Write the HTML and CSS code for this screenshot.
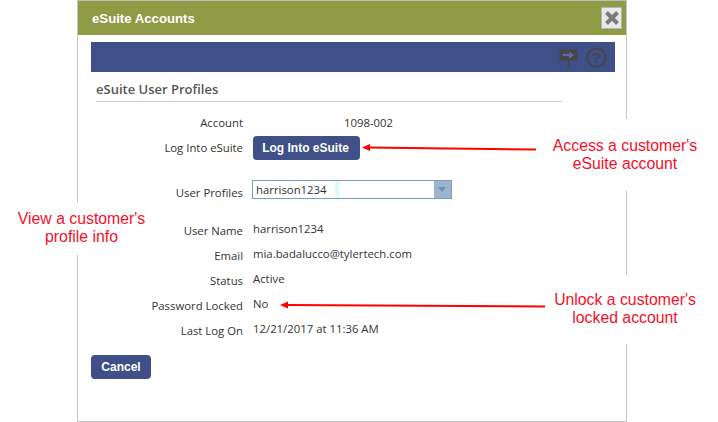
FILE: index.html
```html
<!DOCTYPE html>
<html lang="en">
<head>
<meta charset="utf-8">
<title>eSuite Accounts</title>
<link rel="stylesheet" href="styles.css">
</head>
<body>
<div class="page">
  <section class="dialog">
    <header class="titlebar">
      <h1 class="title">eSuite Accounts</h1>
      <button class="close" type="button" aria-label="Close">
        <svg width="16" height="16" viewBox="0 0 16 16"><path class="close-x" d="M2.5 2.5l11 11M13.5 2.5l-11 11"/></svg>
      </button>
    </header>
    <div class="toolbar">
      <svg class="tool-sign" width="19" height="19" viewBox="0 0 19 19"><path class="sign" d="M0.5 0.5h18v11h-8v7h-2v-7h-8z"/><path class="sign-arrow" d="M4 5h6V2.5l5 3.5-5 3.5V7H4z"/></svg>
      <svg class="tool-help" width="21" height="21" viewBox="0 0 21 21"><circle class="help-ring" cx="10.5" cy="10.5" r="9.2"/><text class="help-q" x="10.5" y="15.5" text-anchor="middle">?</text></svg>
    </div>
    <h2 class="section">eSuite User Profiles</h2>
    <div class="form form-top">
      <div class="label">Account</div><div class="value value-account">1098-002</div>
      <div class="label label-login">Log Into eSuite</div><div class="value"><button class="btn btn-login" type="button">Log Into eSuite</button></div>
    </div>
    <div class="form form-select">
      <div class="label label-select">User Profiles</div>
      <div class="select"><span class="select-text">harrison1234</span><span class="select-fade"></span><span class="select-arrow"></span></div>
    </div>
    <div class="form form-info">
      <div class="label">User Name</div><div class="value">harrison1234</div>
      <div class="label">Email</div><div class="value">mia.badalucco@tylertech.com</div>
      <div class="label">Status</div><div class="value">Active</div>
      <div class="label">Password Locked</div><div class="value">No</div>
      <div class="label">Last Log On</div><div class="value">12/21/2017 at 11:36 AM</div>
    </div>
    <button class="btn btn-cancel" type="button">Cancel</button>
  </section>

  <div class="note note-access">Access a customer's<br>eSuite account</div>
  <div class="note note-unlock">Unlock a customer's<br>locked account</div>
  <div class="note note-view">View a customer's<br>profile info</div>

  <svg class="arrows" width="718" height="422" viewBox="0 0 718 422">
    <path class="arrow-line" d="M536 149.5L368 147.5"/>
    <path class="arrow-head" d="M362 147.5l8-3.5v7z"/>
    <path class="arrow-line" d="M545 306.5L286 305"/>
    <path class="arrow-head" d="M280 305l8-3.5v7z"/>
  </svg>
</div>
</body>
</html>
```
FILE: styles.css
```css
* { box-sizing: border-box; }
html, body { margin: 0; padding: 0; background: #fff; }
.page { position: relative; width: 718px; height: 422px; overflow: hidden; font-family: "Open Sans", "Noto Sans", sans-serif; color: #333; }

.dialog { width: 550px; height: 422px; margin-left: 77px; border: 1px solid #c6c6c6; border-top-color: #bdbdbd; }
.titlebar { height: 34px; background: #8f9a45; display: flex; align-items: center; justify-content: space-between; padding: 0 4px 0 14px; }
.title { margin: 0; font: bold 13.2px "Liberation Sans", Arial, sans-serif; color: #fff; }
.close { width: 21px; height: 22px; padding: 0; background: #e9e9e9; border: 1px solid #b4b4b4; display: flex; align-items: center; justify-content: center; }
.close-x { fill: none; stroke: #7b7b7b; stroke-width: 4; }

.toolbar { height: 30px; margin: 7px 11px 0 13px; background: #3f4f88; display: flex; align-items: center; justify-content: flex-end; gap: 8px; padding-right: 8px; }
.tool-sign { margin-top: 2px; }
.sign { fill: #464649; }
.sign-arrow { fill: #5a6ba8; }
.help-ring { fill: none; stroke: #45454d; stroke-width: 2.2; }
.help-q { font: bold 15px "Liberation Sans", Arial, sans-serif; fill: #45454d; }

.section { margin: 9px 64px 0 18px; height: 21px; padding: 0; border-bottom: 1px solid #c9c9c9; font: 600 13px/16px "Open Sans", sans-serif; color: #555; }

.form { display: grid; grid-template-columns: 165px 1fr; column-gap: 10px; font-size: 11.35px; line-height: 16px; }
.label { text-align: right; padding-top: 2px; color: #333; }
.value { color: #333; }
.form-top { margin-top: 11px; grid-template-rows: 23px 24px; }
.value-account { padding: 2px 0 0 91px; }
.label-login { padding-top: 4px; }
.form-select { margin-top: 17px; align-items: center; }
.label-select { padding-top: 8px; }
.form-info { margin-top: 20px; grid-auto-rows: 25px; }

.btn { border: 0; border-radius: 4px; background: #3f4f88; color: #fff; font: bold 12px "Liberation Sans", Arial, sans-serif; padding: 0; }
.btn-login { width: 107px; height: 24px; padding-right: 2px; }
.btn-cancel { display: block; width: 60px; height: 24px; margin: 9px 0 0 13px; }

.select { position: relative; width: 200px; height: 19px; margin-left: -1px; border: 1px solid #7c9dbd; display: flex; align-items: center; padding: 1px 0 0 3px; background: #fff; }
.select-text { font-size: 11.35px; }
.select-fade { position: absolute; left: 80px; top: 0; bottom: 0; width: 6px; background: linear-gradient(90deg, #fff, #d4f2fa); }
.select-arrow { position: absolute; right: 0; top: 0; bottom: 0; width: 17px; background: #9ab6cf; }
.select-arrow::after { content: ""; position: absolute; left: 4px; top: 6px; border: 4px solid transparent; border-top: 5px solid #6f8fae; border-bottom: 0; }

.note { position: absolute; background: #fff; color: #f50f28; font: 15.8px/18px "Liberation Sans", Arial, sans-serif; text-align: center; }
.note-access { left: 540px; top: 119px; width: 170px; height: 72px; padding-top: 18px; }
.note-unlock { left: 540px; top: 275px; width: 170px; height: 69px; padding-top: 16px; }
.note-view { left: 8px; top: 202px; width: 147px; height: 53px; padding-top: 8px; }

.arrows { position: absolute; left: 0; top: 0; pointer-events: none; }
.arrow-line { fill: none; stroke: #f00; stroke-width: 2; }
.arrow-head { fill: #f00; }
```
